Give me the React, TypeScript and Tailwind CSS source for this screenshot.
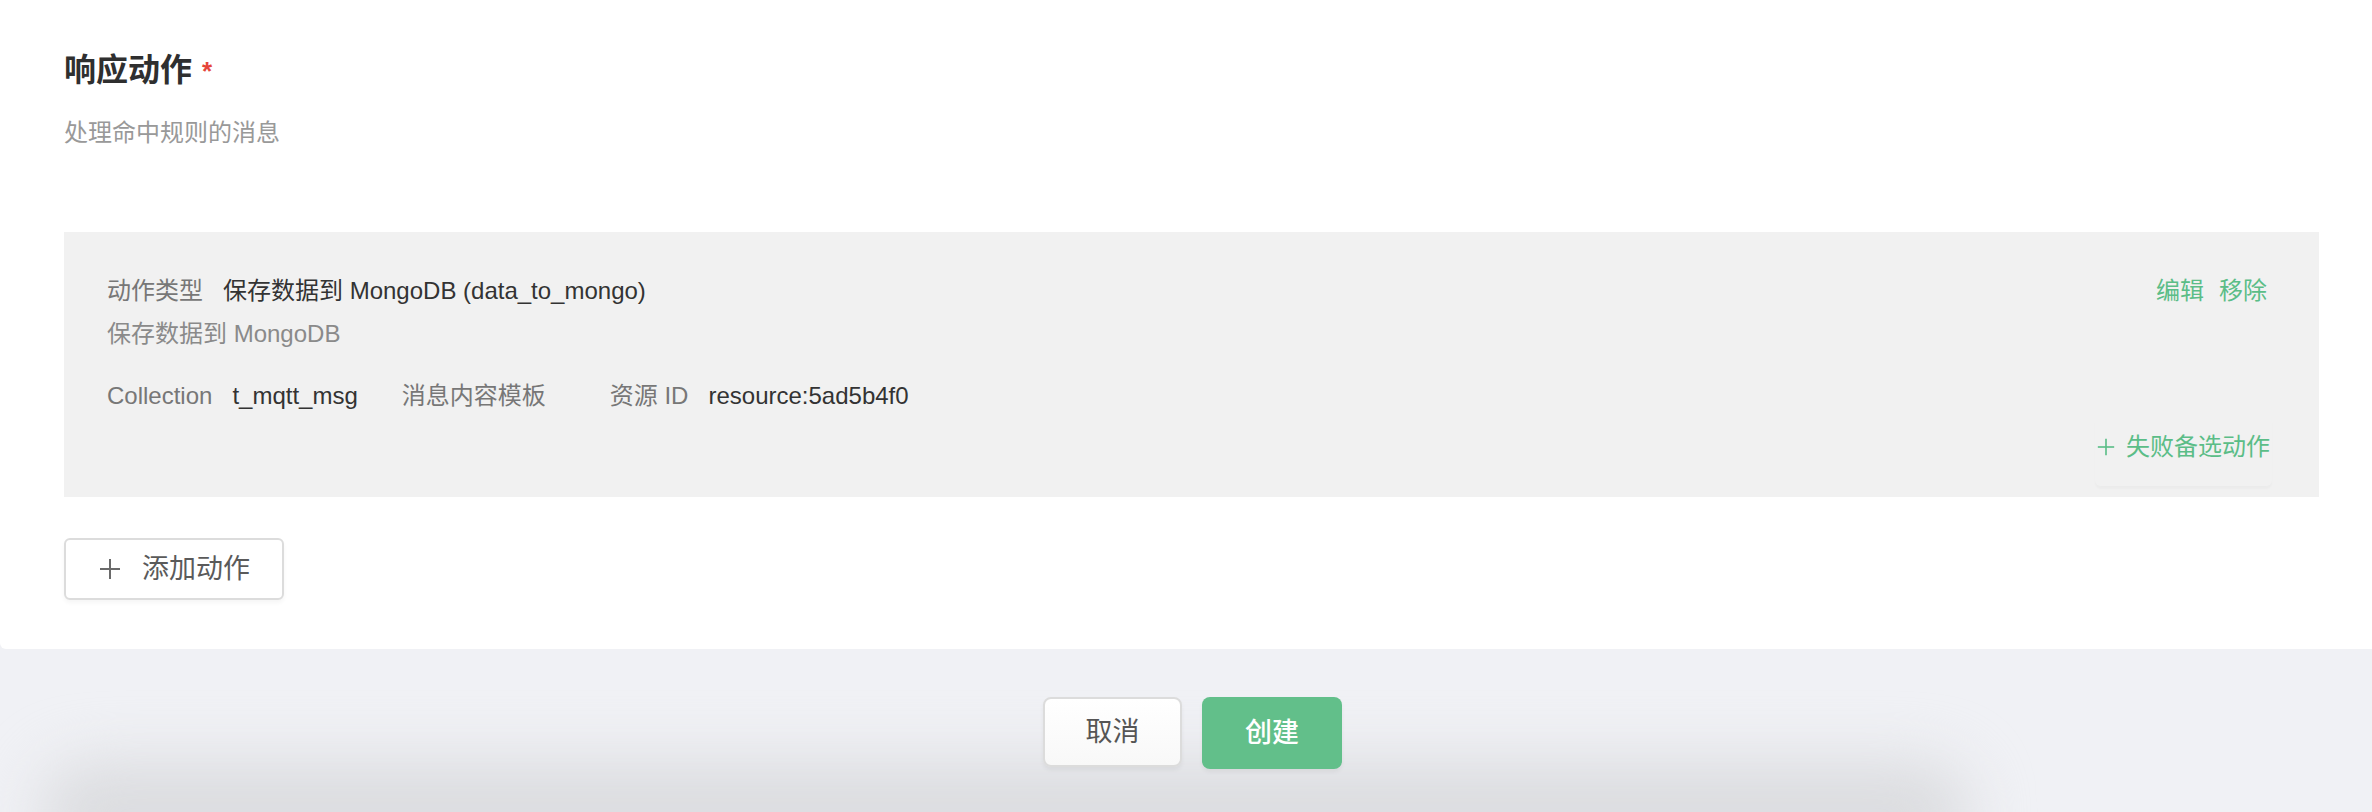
import React from 'react';

const font = "font-['Liberation_Sans','Noto_Sans_CJK_SC',sans-serif]";

const PlusIcon: React.FC<{ className?: string; size?: number }> = ({ className, size = 22 }) => (
  <svg width={size} height={size} viewBox="0 0 22 22" className={className} fill="none" stroke="currentColor" strokeWidth="2">
    <line x1="11" y1="1" x2="11" y2="21" />
    <line x1="1" y1="11" x2="21" y2="11" />
  </svg>
);

const ActionCard: React.FC = () => {
  return (
    <div className="bg-[#f1f1f1] pl-[43px] pr-[47px] pt-[41px] pb-[11px] text-[24px]">
      <div className="flex justify-between">
        <div>
          <div className="leading-[36px] flex">
            <span className="text-[#777] mr-[20px]">动作类型</span>
            <span className="text-[#333]">保存数据到 MongoDB (data_to_mongo)</span>
          </div>
          <div className="leading-[36px] mt-[7px] text-[#8a8a8a]">保存数据到 MongoDB</div>
          <div className="leading-[36px] mt-[26px] flex gap-[44px]">
            {[
              { label: 'Collection', value: 't_mqtt_msg' },
              { label: '消息内容模板', value: '' },
              { label: '资源 ID', value: 'resource:5ad5b4f0' },
            ].map((item, idx) => (
              <div key={idx} className="flex">
                <span className="text-[#777] mr-[20px]">{item.label}</span>
                <span className="text-[#333]">{item.value}</span>
              </div>
            ))}
          </div>
        </div>
        <div className="flex gap-[15px] leading-[36px] text-[#5bbd87] mr-[5px] self-start">
          <span>编辑</span>
          <span>移除</span>
        </div>
      </div>
      <div className="flex justify-end">
        <button className="h-[70px] px-[2px] pb-[8px] mt-[2px] flex items-center gap-[11px] text-[#5bbd87] rounded-[6px] shadow-[0_3px_2px_rgba(0,0,0,0.025)]">
          <PlusIcon size={18} />
          <span className="leading-[36px]">失败备选动作</span>
        </button>
      </div>
    </div>
  );
};

export default function App() {
  return (
    <div className={`${font} w-[2372px] h-[812px] bg-[#f0f1f5] flex flex-col overflow-hidden`}>
      <div className="bg-white rounded-bl-[6px] pl-[64px] pr-[53px] pt-[50px] pb-[49px]">
        <h2 className="text-[32px] leading-[40px] font-bold text-[#2f2f2f] flex items-start">
          响应动作
          <span className="text-[#e5453a] text-[26px] leading-[30px] ml-[10px] mt-[6px]">*</span>
        </h2>
        <p className="text-[24px] leading-[32px] text-[#999] mt-[27px]">处理命中规则的消息</p>

        <div className="mt-[83px]">
          <ActionCard />
        </div>

        <button className="mt-[41px] w-[220px] h-[62px] flex items-center pl-[33px] gap-[21px] border-2 border-[#dcdcdc] rounded-[6px] bg-white text-[#5a5a5a] text-[27px] shadow-[0_3px_4px_rgba(0,0,0,0.04)]">
          <PlusIcon className="text-[#6a6a6a]" />
          <span>添加动作</span>
        </button>
      </div>

      <div className="relative flex-1 overflow-hidden">
        <div className="absolute left-[40px] w-[1930px] bottom-[-50px] h-[100px] rounded-[50px] bg-[#dbdcdf] blur-[30px]" />
        <div className="relative flex justify-center gap-[20px] pt-[48px] pl-[13px]">
          <button className="w-[139px] h-[70px] rounded-[8px] border-2 border-[#dcdcdc] bg-linear-to-b from-white to-[#f8f8f8] text-[27px] text-[#555] shadow-[0_3px_4px_rgba(0,0,0,0.05)]">
            取消
          </button>
          <button className="w-[140px] h-[72px] rounded-[8px] bg-[#62bf8a] text-[27px] text-white font-medium shadow-[0_3px_4px_rgba(0,0,0,0.05)]">
            创建
          </button>
        </div>
      </div>
    </div>
  );
}
